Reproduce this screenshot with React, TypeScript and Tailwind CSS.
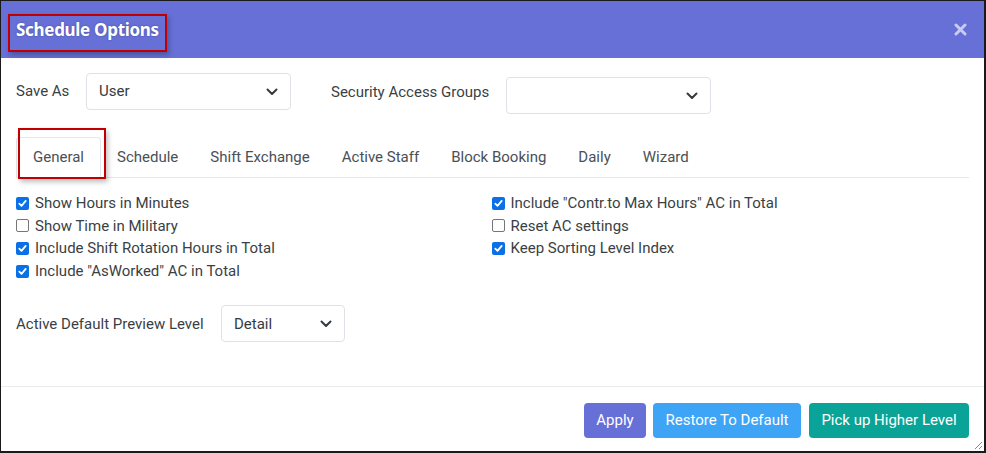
import React from "react";

function Chevron() {
  return (
    <svg width="12" height="8" viewBox="0 0 12 8" fill="none">
      <path d="M1.5 1.5 L6 6 L10.5 1.5" stroke="#343a40" strokeWidth="2" strokeLinecap="round" strokeLinejoin="round" />
    </svg>
  );
}

function Select({ value, w }: { value: string; w: string }) {
  return (
    <div className={`${w} h-[37px] border border-[#dee2e6] rounded-[4px] bg-white flex items-center justify-between pl-3 pr-[12px] text-[15px] text-[#343a40]`}>
      <span>{value}</span>
      <Chevron />
    </div>
  );
}

function Check({ checked, label }: { checked: boolean; label: string }) {
  return (
    <div className="flex items-center h-[22.6px]">
      {checked ? (
        <span className="w-[13px] h-[13px] rounded-[2px] bg-[#0b6fe6] flex items-center justify-center">
          <svg width="9" height="9" viewBox="0 0 9 9" fill="none">
            <path d="M1.3 4.6 L3.5 6.8 L7.7 1.9" stroke="white" strokeWidth="1.8" strokeLinecap="round" strokeLinejoin="round" />
          </svg>
        </span>
      ) : (
        <span className="w-[13px] h-[13px] rounded-[2px] border border-[#767676] bg-white" />
      )}
      <span className="ml-[6px] text-[15px] text-[#3a3f44]">{label}</span>
    </div>
  );
}

export default function App() {
  const tabs = ["General", "Schedule", "Shift Exchange", "Active Staff", "Block Booking", "Daily", "Wizard"];
  return (
    <div
      className="w-[986px] h-[453px] bg-white border-l border-t border-r-2 border-b-2 border-[#1a1a1a] flex flex-col overflow-hidden"
      style={{ fontFamily: "Roboto, 'Liberation Sans', sans-serif" }}
    >
      <div className="relative h-[57px] bg-[#6670d6] flex items-center justify-between pl-[15px] pr-[17px] shrink-0">
        <span
          className="text-white text-[17px] font-bold tracking-[-0.3px]"
          style={{ fontFamily: "'Noto Sans', Inter, sans-serif", textShadow: "0 0 2px rgba(40,40,90,0.5)" }}
        >
          Schedule Options
        </span>
        <div className="absolute left-[7px] top-[13px] w-[159px] h-[38px] border-2 border-[#c00000] shadow-[2px_3px_5px_rgba(0,0,0,0.25)]" />
        <svg width="13" height="13" viewBox="0 0 13 13">
          <path d="M2 2 L11 11 M11 2 L2 11" stroke="#c9ccf2" strokeWidth="3" strokeLinecap="round" />
        </svg>
      </div>

      <div className="flex-1 px-[15px] flex flex-col">
        <div className="flex items-start mt-[15px]">
          <div className="flex items-center">
            <span className="text-[15px] text-[#3a3f44] w-[70px]">Save As</span>
            <Select value="User" w="w-[205px]" />
          </div>
          <div className="flex items-start ml-[40px]">
            <span className="text-[15px] text-[#3a3f44] mt-[8px] w-[175px]">Security Access Groups</span>
            <div className="mt-[4px]">
              <Select value="" w="w-[205px]" />
            </div>
          </div>
        </div>

        <div className="relative mt-[23px] flex border-b border-[#e3e6ea] w-[953px]">
          {tabs.map((t, i) => (
            <div
              key={t}
              className={`px-4 h-[40px] flex items-center text-[15px] text-[#495057] ${
                i === 0 ? "border border-b-0 border-[#e3e6ea] rounded-t-[4px] bg-white -mb-px" : ""
              }`}
            >
              {t}
            </div>
          ))}
          <div className="absolute left-[2px] top-[-9px] w-[88px] h-[51px] border-2 border-[#c00000] shadow-[2px_3px_5px_rgba(0,0,0,0.25)]" />
        </div>

        <div className="grid grid-cols-2 w-[953px] mt-[14px]">
          <div className="flex flex-col">
            <Check checked label="Show Hours in Minutes" />
            <Check checked={false} label="Show Time in Military" />
            <Check checked label="Include Shift Rotation Hours in Total" />
            <Check checked label={'Include "AsWorked" AC in Total'} />
          </div>
          <div className="flex flex-col -ml-[1px]">
            <Check checked label={'Include "Contr.to Max Hours" AC in Total'} />
            <Check checked={false} label="Reset AC settings" />
            <Check checked label="Keep Sorting Level Index" />
          </div>
        </div>

        <div className="flex items-center mt-[23px]">
          <span className="text-[15px] text-[#3a3f44] w-[205px]">Active Default Preview Level</span>
          <Select value="Detail" w="w-[124px]" />
        </div>
      </div>

      <div className="border-t border-[#e9ecef] h-[65px] shrink-0 flex items-start justify-end pr-[15px] pt-[16px] gap-[7px] relative">
        <button className="h-[35px] w-[62px] rounded-[4px] bg-[#6670d6] text-white text-[15px]">Apply</button>
        <button className="h-[35px] w-[148px] rounded-[4px] bg-[#3ea5f6] text-white text-[15px]">Restore To Default</button>
        <button className="h-[35px] w-[160px] ml-[1px] rounded-[4px] bg-[#09a497] text-white text-[15px]">Pick up Higher Level</button>
        <svg className="absolute right-[1px] bottom-[1px]" width="10" height="10" viewBox="0 0 10 10">
          <path d="M9 2 L2 9 M9 6 L6 9" stroke="#888" strokeWidth="1" />
        </svg>
      </div>
    </div>
  );
}
